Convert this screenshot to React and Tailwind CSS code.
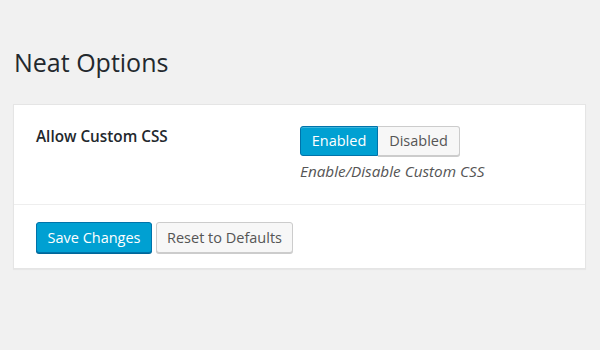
export default function App() {
  return (
    <div className="w-[600px] h-[350px] bg-[#f1f1f1] font-['Open_Sans',sans-serif] pl-[13px] pr-[14px] pt-[46px]">
      <h1 className="text-[25px] leading-[32px] text-[#23282d] font-normal pl-px">Neat Options</h1>
      <div className="mt-[26px] bg-white border border-[#e5e5e5] shadow-[0_1px_1px_rgba(0,0,0,0.04)]">
        <div className="flex pl-[22px] pt-[21px] pb-[23px]">
          <div className="w-[264px] pt-0 text-[15.3px] leading-[20px] font-semibold text-[#23282d]">Allow Custom CSS</div>
          <div>
            <div className="flex">
              <button className="h-[30px] w-[78px] text-[14.5px] text-white bg-[#00a0d2] border border-[#0073aa] rounded-l-[3px] shadow-[inset_0_1px_0_rgba(120,200,230,0.5)]">Enabled</button>
              <button className="h-[30px] w-[82px] text-[14.5px] text-[#555] bg-[#f7f7f7] border border-l-0 border-[#cccccc] rounded-r-[3px] shadow-[0_1px_0_#ccc]">Disabled</button>
            </div>
            <p className="mt-[5px] text-[15.3px] leading-[20px] italic text-[#555]">Enable/Disable Custom CSS</p>
          </div>
        </div>
        <div className="border-t border-[#eeeeee] flex gap-[4px] pl-[22px] pt-[17px] pb-[15px]">
          <button className="h-[31px] w-[116px] text-[14.5px] text-white bg-[#00a0d2] border border-[#0073aa] rounded-[3px] shadow-[0_1px_0_#006799]">Save Changes</button>
          <button className="h-[31px] w-[137px] text-[14.5px] text-[#555] bg-[#f7f7f7] border border-[#cccccc] rounded-[3px] shadow-[0_1px_0_#ccc]">Reset to Defaults</button>
        </div>
      </div>
    </div>
  );
}
